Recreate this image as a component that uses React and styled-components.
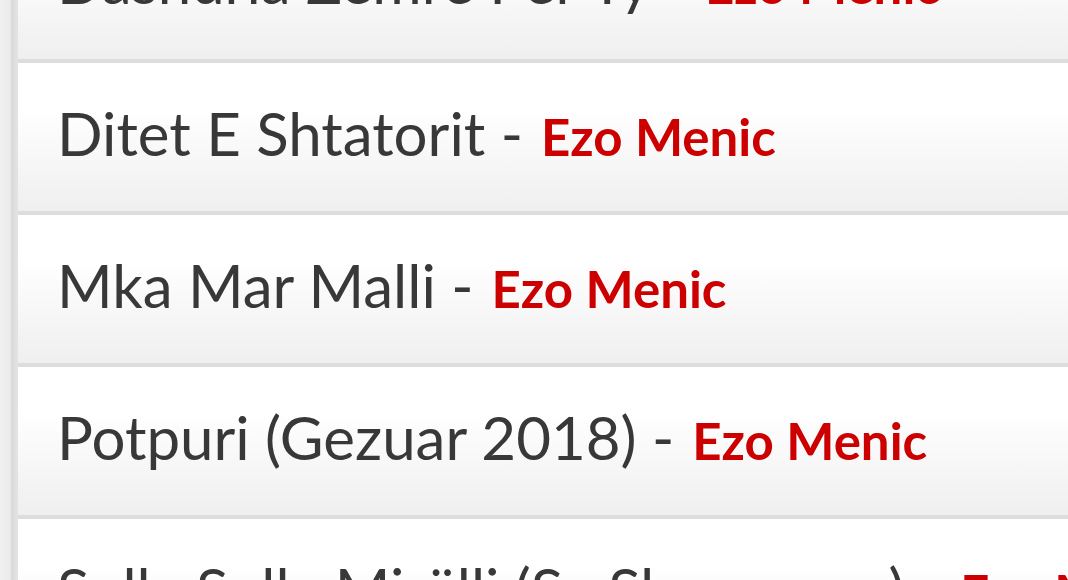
import React from 'react';
import styled, { createGlobalStyle } from 'styled-components';

const GlobalStyle = createGlobalStyle`
  html, body {
    margin: 0;
    padding: 0;
    background: #fff;
    overflow: hidden;
  }
`;

const songs = [
  { title: 'Dashuria Zemre Per Ty', artist: 'Ezo Menic' },
  { title: 'Ditet E Shtatorit', artist: 'Ezo Menic' },
  { title: 'Mka Mar Malli', artist: 'Ezo Menic' },
  { title: 'Potpuri (Gezuar 2018)', artist: 'Ezo Menic' },
  { title: 'Sulla Sulla Mirëlli (Sa Shume ore)', artist: 'Ezo Menic' },
];

const Page = styled.div`
  display: flex;
  height: 580px;
  overflow: hidden;
  font-family: Lato, 'Open Sans', sans-serif;
`;

const Rail = styled.div`
  width: 18px;
  flex-shrink: 0;
  background: linear-gradient(to right, #f0f0f0 0, #ebebeb 10px, #d9d9d9 12px, #e3e3e3 17px);
`;

const List = styled.ul`
  list-style: none;
  margin: -93px 0 0;
  padding: 0;
  flex: 1;
`;

const Row = styled.li`
  height: 148px;
  border-top: 4px solid #dddddd;
  background: linear-gradient(to bottom, #ffffff 30%, #efefef 100%);
  display: flex;
  align-items: baseline;
  padding: 0 0 0 39px;
  box-sizing: content-box;
  white-space: nowrap;
`;

const Title = styled.span`
  font-size: 60px;
  line-height: 1;
  color: #383838;
  padding-top: 40px;
`;

const Artist = styled.span`
  font-size: 51px;
  font-weight: 700;
  color: #cc0000;
  margin-left: 18px;
`;

export default function App() {
  return (
    <>
      <GlobalStyle />
      <Page>
        <Rail />
        <List>
          {songs.map((s) => (
            <Row key={s.title}>
              <Title>{s.title} -</Title>
              <Artist>{s.artist}</Artist>
            </Row>
          ))}
        </List>
      </Page>
    </>
  );
}
